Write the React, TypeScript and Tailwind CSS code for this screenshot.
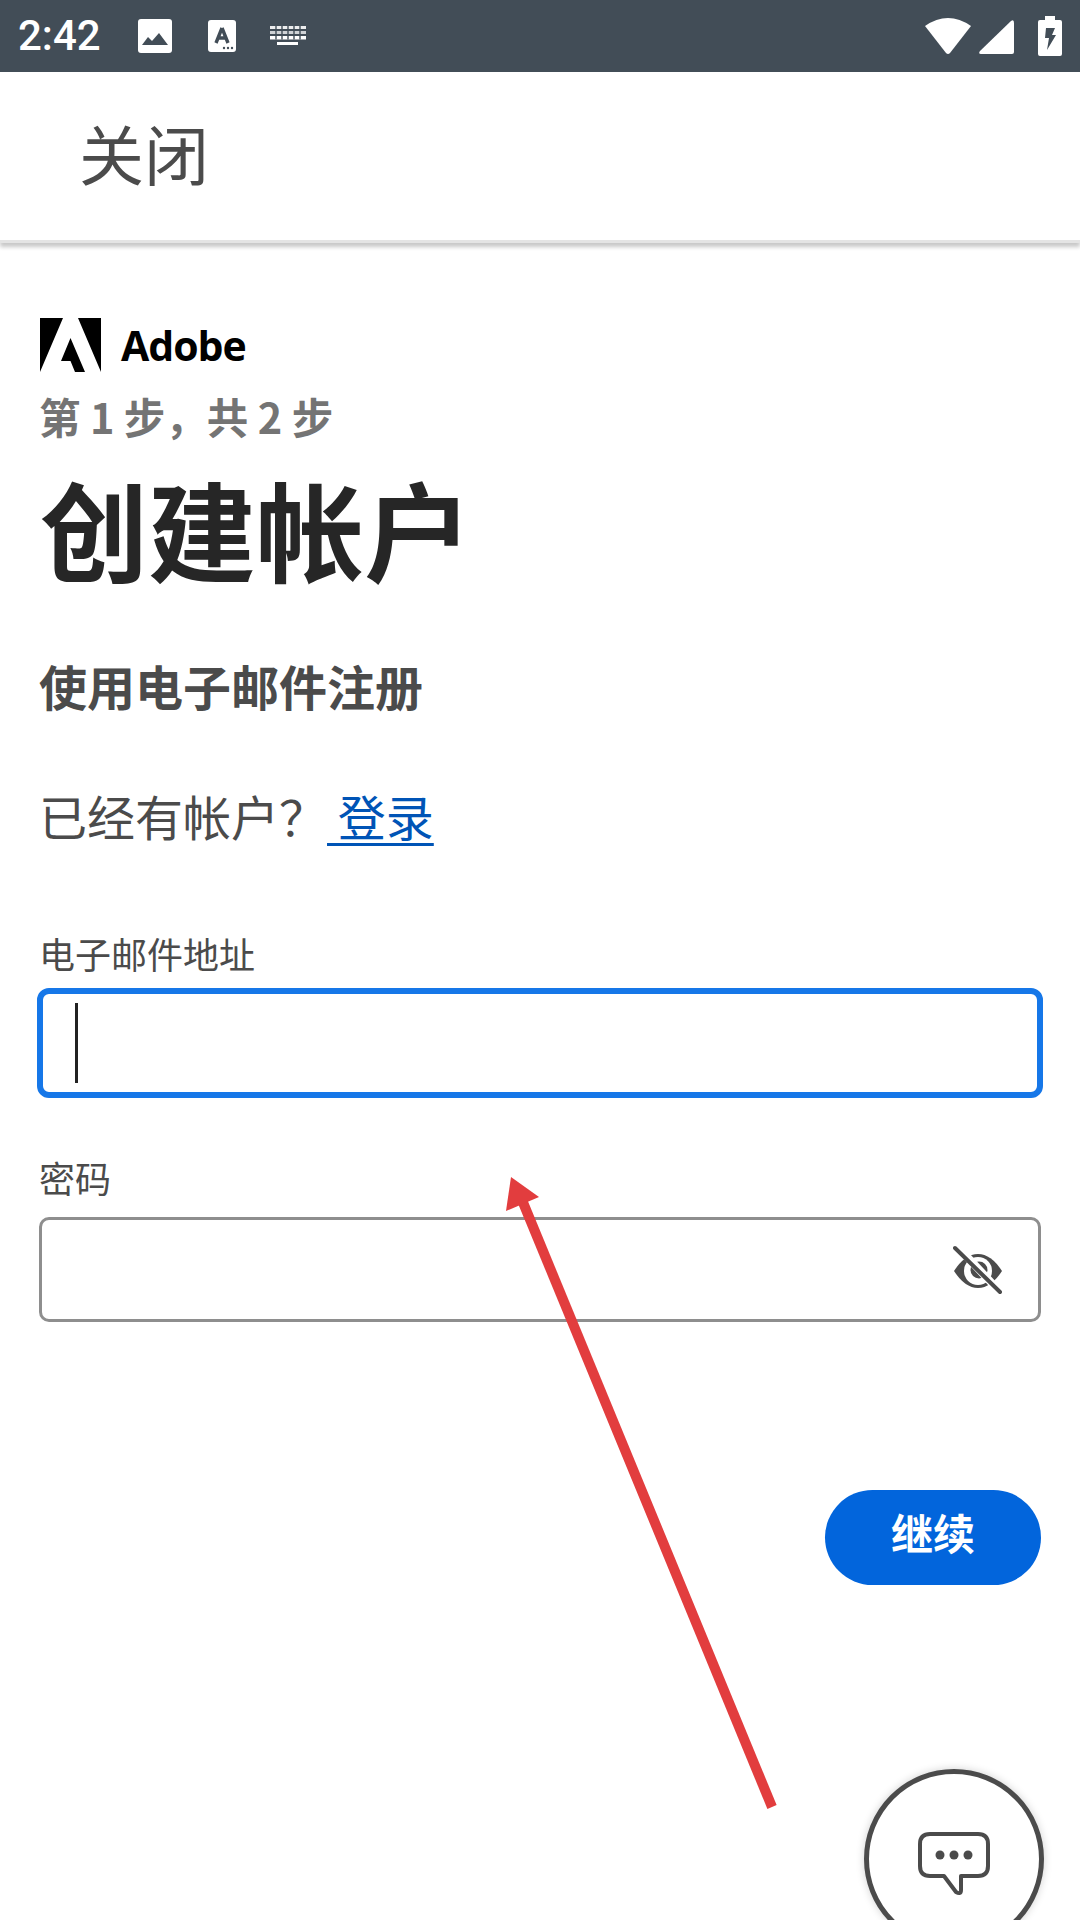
import React from 'react';

const cjk = "font-['Noto_Sans_CJK_SC','Roboto',sans-serif]";

const StatusBar = () => (
  <div className="flex h-[72px] shrink-0 items-center bg-[#424d57] pl-[18px] pr-[18px] text-white">
    <span className="w-[102px] font-['Roboto',sans-serif] text-[42px] font-medium leading-none">2:42</span>
    <svg width="36" height="36" viewBox="0 0 36 36" className="ml-[17px]">
      <rect x="1" y="1" width="34" height="34" rx="3" fill="#fff" />
      <path d="M5 27 L11 19 L15 23 L22 15 L31 27 Z" fill="#424d57" />
    </svg>
    <svg width="28" height="32" viewBox="0 0 28 32" className="ml-[35px]">
      <rect width="28" height="32" rx="3" fill="#fff" />
      <path d="M14 8 L8 23 M14 8 L20 23 M10 18 H18" stroke="#424d57" strokeWidth="3.4" fill="none" />
      <circle cx="16" cy="28" r="1.2" fill="#424d57" />
      <circle cx="20" cy="28" r="1.2" fill="#424d57" />
      <circle cx="24" cy="28" r="1.2" fill="#424d57" />
    </svg>
    <svg width="36" height="20" viewBox="0 0 36 20" className="ml-[34px]" fill="#fff">
      <path d="M0 0 H36 V3 H0 Z" opacity=".9" />
      <path d="M0 5 H36 V8 H0 Z" opacity=".75" />
      <path d="M0 10 H36 V13.5 H0 Z" />
      <path d="M7 16 H28 V19 H7 Z" />
      <path d="M6 0 V13.5 M12 0 V13.5 M18 0 V13.5 M24 0 V13.5 M30 0 V13.5" stroke="#424d57" strokeWidth="1.4" />
    </svg>
    <div className="ml-auto flex items-center">
      <svg width="46" height="38" viewBox="0 0 46 38">
        <path d="M0 9 Q23 -7 46 9 L25 36 Q23 38 21 36 Z" fill="#fff" />
      </svg>
      <svg width="36" height="36" viewBox="0 0 36 36" className="ml-[8px] mt-[2px]">
        <path d="M1 32 L32 2 Q35 0 35 4 V33 Q35 35 33 35 H2 Q-1 35 1 32 Z" fill="#fff" />
      </svg>
      <svg width="24" height="40" viewBox="0 0 24 40" className="ml-[23px]">
        <path d="M7 0 H17 V4 H22 Q24 4 24 6 V38 Q24 40 22 40 H2 Q0 40 0 38 V6 Q0 4 2 4 H7 Z" fill="#fff" />
        <path d="M8 12 H17 L14 19 H18 L9 34 L11 22 H7 Z" fill="#424d57" />
      </svg>
    </div>
  </div>
);

const AdobeLogo = () => (
  <svg width="61" height="54" viewBox="0 0 61 54" className="shrink-0">
    <path d="M0 0 H23 L0 54 Z M38 0 H61 V54 Z" fill="#000" />
    <path d="M30.5 20 L45 54 H35 L30.5 43 H21 Z" fill="#000" />
  </svg>
);

const Field = ({ label, focused, children }: { label: string; focused?: boolean; children?: React.ReactNode }) => (
  <div className="flex flex-col">
    <label className={`${cjk} -ml-[1px] h-[48px] text-[36px] leading-[48px] text-[#4b4b4b]`}>{label}</label>
    {focused ? (
      <div className="-ml-[3px] mt-[11px] flex h-[110px] w-[1006px] items-center rounded-[12px] border-[6px] border-[#1677e8] bg-white pl-[32px]">
        {children}
      </div>
    ) : (
      <div className="-ml-[1px] mt-[16px] flex h-[105px] w-[1002px] items-center justify-end rounded-[10px] border-[3px] border-[#8e8e8e] bg-white pr-[35px]">
        {children}
      </div>
    )}
  </div>
);

export default function App() {
  return (
    <div className={`relative flex h-[1920px] w-[1080px] flex-col overflow-hidden bg-white ${cjk}`}>
      <StatusBar />
      <div className="flex h-[171px] shrink-0 items-center border-b-[3px] border-[#e4e4e4] pb-[8px] pl-[79px] shadow-[0_4px_4px_rgba(0,0,0,0.22)]">
        <span className="text-[65px] leading-none text-[#4b4b4b]">关闭</span>
      </div>

      <main className="flex flex-col px-[40px] pt-[75px]">
        <div className="flex h-[54px] items-center gap-[20px]">
          <AdobeLogo />
          <span className="font-['Open_Sans',sans-serif] text-[41px] font-bold leading-none tracking-[-1px] text-black">Adobe</span>
        </div>
        <p className="-ml-[1px] mt-[14px] h-[60px] text-[41.5px] font-bold leading-[60px] text-[#747474]">第 1 步，共 2 步</p>
        <h1 className="mt-[17px] h-[128px] text-[108px] font-bold leading-[128px] text-[#262626]">创建帐户</h1>
        <h2 className="-ml-[1px] mt-[58px] h-[72px] text-[48px] font-bold leading-[72px] text-[#4b4b4b]">使用电子邮件注册</h2>
        <p className="-ml-[1px] mt-[58px] h-[72px] text-[48px] leading-[72px] text-[#4b4b4b]">
          已经有帐户？<a className="text-[#0054b6] underline decoration-[3px] underline-offset-[7px]"> 登录</a>
        </p>

        <div className="mt-[78px]">
          <Field label="电子邮件地址" focused>
            <div className="h-[80px] w-[3px] bg-[#222222]" />
          </Field>
        </div>
        <div className="mt-[55px]">
          <Field label="密码">
            <svg width="50" height="50" viewBox="0 0 50 50" fill="none">
              <path d="M1 26 Q12 9 25 9 Q38 9 49 26 Q38 43 25 43 Q12 43 1 26 Z" fill="#4b4b4b" />
              <circle cx="25" cy="26" r="14" fill="#fff" />
              <circle cx="26" cy="25" r="8.5" fill="#4b4b4b" />
              <path d="M4 1 L48 48" stroke="#fff" strokeWidth="8" />
              <path d="M2 3 L47 47" stroke="#4b4b4b" strokeWidth="4" strokeLinecap="round" />
            </svg>
          </Field>
        </div>

        <div className="mt-[168px] flex w-[1001px] justify-end">
          <button className="h-[95px] w-[216px] rounded-full bg-[#0265dc] pb-[12px] text-[42px] font-bold text-white">继续</button>
        </div>
      </main>

      {/* annotation arrow drawn over the form */}
      <svg className="absolute left-0 top-0" width="1080" height="1920" viewBox="0 0 1080 1920" fill="none">
        <path d="M772 1807 L522 1200" stroke="#e23d3e" strokeWidth="10" />
        <path d="M511 1177 L539 1197 L506 1211 Z" fill="#e23d3e" />
      </svg>

      <button className="absolute left-[864px] top-[1769px] flex h-[180px] w-[180px] justify-center rounded-full border-[5px] border-[#4b4b4b] bg-white pt-[58px] shadow-[0_0_8px_rgba(0,0,0,0.18)]">
        <svg width="72" height="64" viewBox="0 0 72 64" fill="none">
          <path d="M12 2 H60 Q70 2 70 12 V34 Q70 44 60 44 H43 V58 Q43 63 38 60 L26 44 H12 Q2 44 2 34 V12 Q2 2 12 2 Z" stroke="#4b4b4b" strokeWidth="4" strokeLinejoin="round" />
          <circle cx="22" cy="23" r="4.5" fill="#4b4b4b" />
          <circle cx="36" cy="23" r="4.5" fill="#4b4b4b" />
          <circle cx="50" cy="23" r="4.5" fill="#4b4b4b" />
        </svg>
      </button>
    </div>
  );
}
